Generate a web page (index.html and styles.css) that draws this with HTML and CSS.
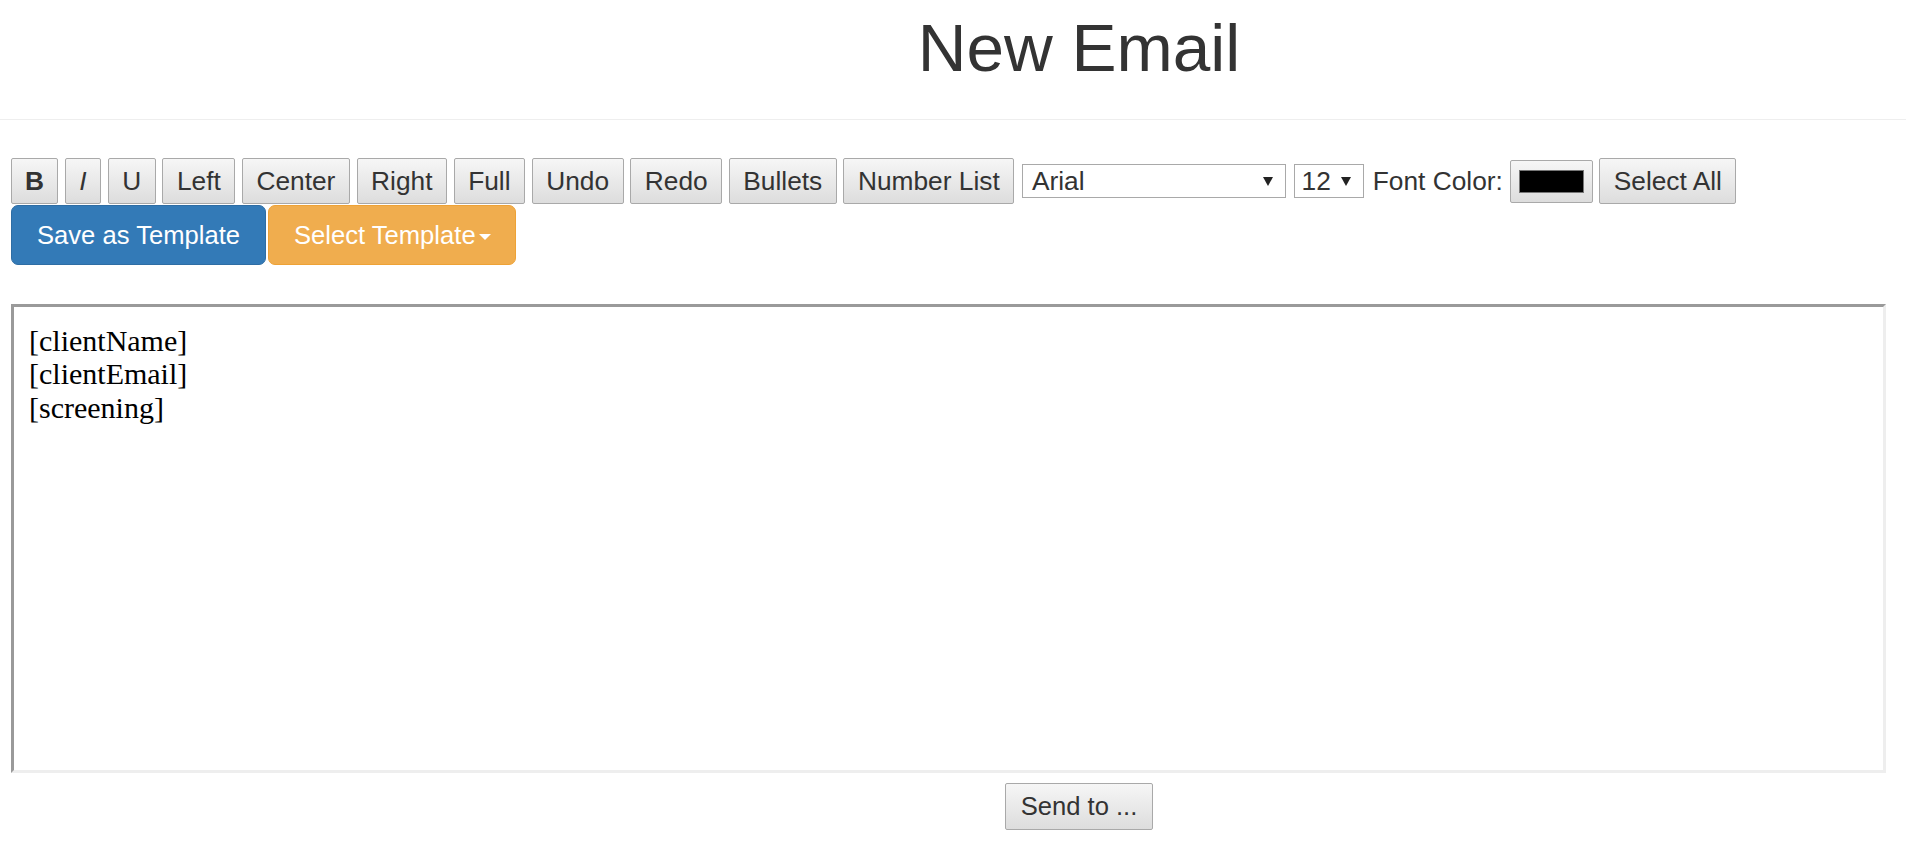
FILE: index.html
```html
<!DOCTYPE html>
<html lang="en">
<head>
<meta charset="utf-8">
<title>New Email</title>
<link rel="stylesheet" href="styles.css">
</head>
<body>
<header class="header">
  <h1 class="title">New Email</h1>
</header>
<main class="main">
  <div class="toolbar">
    <button class="tb-btn tb-bold">B</button>
    <button class="tb-btn tb-italic">I</button>
    <button class="tb-btn">U</button>
    <button class="tb-btn">Left</button>
    <button class="tb-btn">Center</button>
    <button class="tb-btn">Right</button>
    <button class="tb-btn">Full</button>
    <button class="tb-btn">Undo</button>
    <button class="tb-btn">Redo</button>
    <button class="tb-btn">Bullets</button>
    <button class="tb-btn">Number List</button>
    <div class="select select-font"><span>Arial</span><span class="arrow"></span></div>
    <div class="select select-size"><span>12</span><span class="arrow"></span></div>
    <span class="label">Font Color:</span>
    <button class="tb-btn color-btn"><span class="swatch"></span></button>
    <button class="tb-btn">Select All</button>
  </div>
  <div class="template-row">
    <button class="btn btn-primary">Save as Template</button>
    <button class="btn btn-warning">Select Template<span class="caret"></span></button>
  </div>
  <div class="editor" contenteditable="true">
    <div>[clientName]</div>
    <div>[clientEmail]</div>
    <div>[screening]</div>
  </div>
  <div class="send-row">
    <button class="tb-btn send-btn">Send to ...</button>
  </div>
</main>
</body>
</html>
```

FILE: styles.css
```css
* { box-sizing: border-box; }

body {
  margin: 0;
  font-family: "Liberation Sans", Arial, sans-serif;
  color: #333;
  background: #fff;
}

.header {
  padding: 11px 0 34px 252px;
  border-bottom: 1px solid #eee;
  text-align: center;
}

.title {
  margin: 0;
  font-size: 67.5px;
  line-height: 74px;
  font-weight: 400;
  color: #333;
}

.main {
  padding: 38px 20px 0 11px;
}

.toolbar {
  display: flex;
  align-items: center;
  gap: 6.7px;
  height: 46px;
}

.tb-btn {
  height: 46px;
  padding: 0 13.5px;
  font-family: "Liberation Sans", Arial, sans-serif;
  font-size: 26.3px;
  color: #333;
  background: linear-gradient(#f6f6f6, #dddddd);
  border: 1px solid #a9a9a9;
  border-radius: 2px;
  white-space: nowrap;
}

.tb-bold { font-weight: 700; padding: 0 13px; }
.tb-italic { font-style: italic; padding: 0 13.5px; }

.select {
  display: flex;
  align-items: center;
  justify-content: space-between;
  height: 34px;
  background: #fff;
  border: 1px solid #a9a9a9;
  font-size: 26.3px;
  color: #333;
  margin-left: 1px;
}

.select-font {
  width: 264px;
  padding: 0 12px 0 9px;
}

.select-size {
  width: 70px;
  padding: 0 12px 0 7px;
}

.arrow {
  width: 0;
  height: 0;
  border-left: 5px solid transparent;
  border-right: 5px solid transparent;
  border-top: 9px solid #222;
}

.label {
  font-size: 26.3px;
  white-space: nowrap;
  margin-left: 2.5px;
}

.color-btn {
  width: 83px;
  height: 43px;
  padding: 0;
  display: flex;
  align-items: center;
  justify-content: center;
}

.swatch {
  width: 65px;
  height: 23px;
  background: #000;
  border: 1px solid #777;
}

.template-row {
  display: flex;
  gap: 2px;
  margin-top: 1px;
}

.btn {
  height: 60px;
  padding: 0 25px;
  font-family: "Liberation Sans", Arial, sans-serif;
  font-size: 25.6px;
  color: #fff;
  border-radius: 7px;
  display: flex;
  align-items: center;
}

.btn-primary {
  background: #337ab7;
  border: 1px solid #2e6da4;
}

.btn-warning {
  background: #f0ad4e;
  border: 1px solid #eea236;
  padding-right: 24px;
}

.caret {
  width: 0;
  height: 0;
  margin-left: 3px;
  margin-top: 3px;
  border-left: 6px solid transparent;
  border-right: 6px solid transparent;
  border-top: 6px solid #fff;
}

.editor {
  margin-top: 39px;
  width: 1875px;
  height: 469px;
  padding: 17px 15px;
  border-style: solid;
  border-width: 3px;
  border-color: #9a9a9a #eeeeee #eeeeee #9a9a9a;
  font-family: "Liberation Serif", "Times New Roman", serif;
  font-size: 30px;
  line-height: 33.4px;
  color: #000;
  outline: none;
}

.send-row {
  display: flex;
  justify-content: center;
  padding-left: 261px;
  margin-top: 10px;
}

.send-btn {
  height: 47px;
  font-size: 25.6px;
  padding: 0 15px;
}
```
